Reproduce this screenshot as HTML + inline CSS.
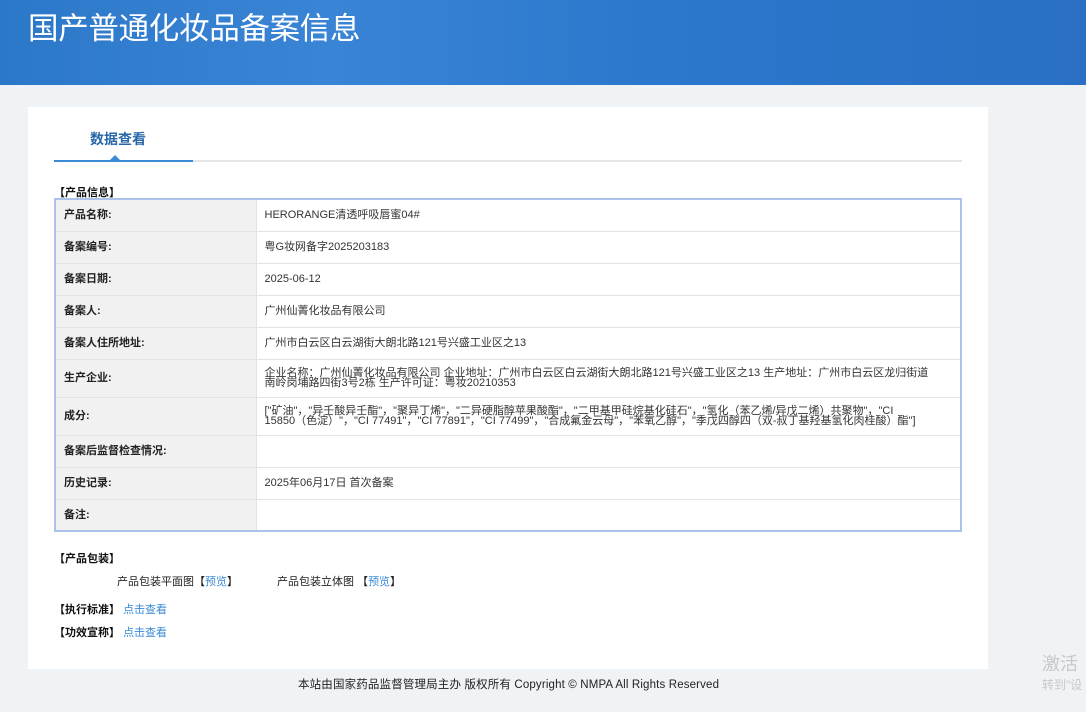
<!DOCTYPE html>
<html><head><meta charset="utf-8"><style>
*{margin:0;padding:0;box-sizing:border-box}
body{width:1086px;height:712px;background:#eff3f6;font-family:"Liberation Sans","Noto Sans CJK SC",sans-serif;font-size:11px;color:#333;position:relative;overflow:hidden}
.hd{position:absolute;left:0;top:0;width:1086px;height:85px;background:linear-gradient(90deg,#2c78c8 0%,#3a84d6 30%,#2b78cc 60%,#2a6fc4 100%)}
.hd h1{position:absolute;left:28px;top:4px;font-size:30.5px;font-weight:normal;color:#fff;letter-spacing:-0.3px}
.card{position:absolute;left:28px;top:107px;width:960px;height:562px;background:#fff}
.tab{position:absolute;left:62px;top:22px;font-size:14px;font-weight:bold;color:#2766a8}
.line{position:absolute;left:26px;top:53px;width:908px;height:2px;background:#e6e6e6}
.line b{position:absolute;left:0;top:0;width:139px;height:2px;background:#3a8ad6}
.tri{position:absolute;left:82px;top:48px;width:0;height:0;border-left:5px solid transparent;border-right:5px solid transparent;border-bottom:5px solid #3a8ad6}
.sec{position:absolute;font-weight:bold;color:#111;font-size:11px}
table{position:absolute;left:26px;top:91px;width:908px;border-collapse:collapse;border:2px solid #a9c3ea}
td{border-bottom:1px solid #e3e3e3;padding:0 8px;line-height:10px;font-size:11px;color:#333}
td.l{width:201px;background:#f1f1f1;font-weight:bold;color:#222;border-right:1px solid #e3e3e3}
a{color:#3a8ad6;text-decoration:none}
.ft{position:absolute;left:298px;top:676px;font-size:11.5px;color:#222;letter-spacing:0.15px}
.wm{position:absolute;left:1042px;top:650px;color:#c8c8c8;font-size:18px}
.wm2{position:absolute;left:1042px;top:676px;color:#c8c8c8;font-size:12px}
</style></head><body>
<div class="hd"><h1>国产普通化妆品备案信息</h1></div>
<div class="card">
<div class="tab">数据查看</div>
<div class="line"><b></b></div><div class="tri"></div>
<div class="sec" style="left:26px;top:77px">【产品信息】</div>
<table>
<tr style="height:32px"><td class="l">产品名称:</td><td>HERORANGE清透呼吸唇蜜04#</td></tr>
<tr style="height:32px"><td class="l">备案编号:</td><td>粤G妆网备字2025203183</td></tr>
<tr style="height:32px"><td class="l">备案日期:</td><td>2025-06-12</td></tr>
<tr style="height:32px"><td class="l">备案人:</td><td>广州仙菁化妆品有限公司</td></tr>
<tr style="height:32px"><td class="l">备案人住所地址:</td><td>广州市白云区白云湖街大朗北路121号兴盛工业区之13</td></tr>
<tr style="height:38px"><td class="l">生产企业:</td><td>企业名称：广州仙菁化妆品有限公司 企业地址：广州市白云区白云湖街大朗北路121号兴盛工业区之13 生产地址：广州市白云区龙归街道<br>南岭岗埔路四街3号2栋 生产许可证：粤妆20210353</td></tr>
<tr style="height:38px"><td class="l">成分:</td><td>["矿油"，"异壬酸异壬酯"，"聚异丁烯"，"二异硬脂醇苹果酸酯"，"二甲基甲硅烷基化硅石"，"氢化（苯乙烯/异戊二烯）共聚物"，"CI<br>15850（色淀）"，"CI 77491"，"CI 77891"，"CI 77499"，"合成氟金云母"，"苯氧乙醇"，"季戊四醇四（双-叔丁基羟基氢化肉桂酸）酯"]</td></tr>
<tr style="height:32px"><td class="l">备案后监督检查情况:</td><td></td></tr>
<tr style="height:32px"><td class="l">历史记录:</td><td>2025年06月17日 首次备案</td></tr>
<tr style="height:32px"><td class="l">备注:</td><td></td></tr>
</table>
<div class="sec" style="left:26px;top:443px">【产品包装】</div>
<div style="position:absolute;left:89px;top:466px;color:#222">产品包装平面图【<a>预览</a>】</div>
<div style="position:absolute;left:249px;top:466px;color:#222">产品包装立体图 【<a>预览</a>】</div>
<div class="sec" style="left:26px;top:494px">【执行标准】 <a style="font-weight:normal">点击查看</a></div>
<div class="sec" style="left:26px;top:517px">【功效宣称】 <a style="font-weight:normal">点击查看</a></div>
</div>
<div class="ft">本站由国家药品监督管理局主办 版权所有 Copyright © NMPA All Rights Reserved</div>
<div class="wm">激活</div><div class="wm2">转到"设</div>
</body></html>
